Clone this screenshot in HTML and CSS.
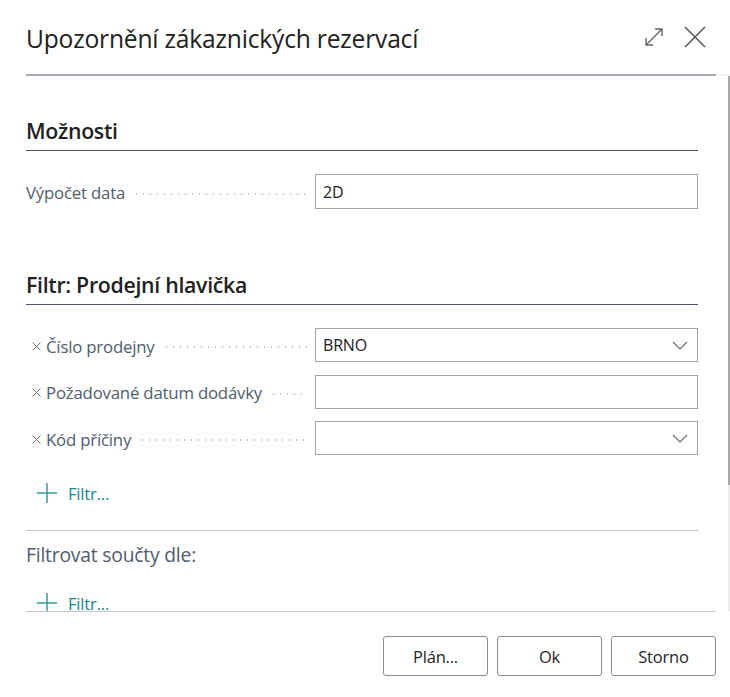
FILE: index.html
```html
<!DOCTYPE html>
<html lang="cs">
<head>
<meta charset="utf-8">
<title>Upozornění zákaznických rezervací</title>
<link rel="stylesheet" href="styles.css">
</head>
<body>
<div class="dialog">
  <header class="header">
    <h1 class="title">Upozornění zákaznických rezervací</h1>
    <div class="actions">
      <svg class="icon-expand" width="20" height="20" viewBox="0 0 20 20" aria-hidden="true">
        <path d="M2 18 L18 2 M11 2 H18 V9 M2 11 V18 H9" fill="none" stroke="#666" stroke-width="1.4"/>
      </svg>
      <svg class="icon-close" width="22" height="22" viewBox="0 0 22 22" aria-hidden="true">
        <path d="M1 1 L21 21 M21 1 L1 21" fill="none" stroke="#5a5a5a" stroke-width="1.6"/>
      </svg>
    </div>
  </header>
  <div class="header-rule"><div class="rule-dark"></div><div class="rule-light"></div></div>

  <div class="body">
    <div class="scroll">
      <section class="section first">
        <h2 class="section-title">Možnosti</h2>
        <div class="row">
          <div class="label-cell"><span class="label">Výpočet data</span><span class="leader"></span></div>
          <div class="field"><span class="value">2D</span></div>
        </div>
      </section>

      <section class="section second">
        <h2 class="section-title">Filtr: Prodejní hlavička</h2>
        <div class="row">
          <div class="label-cell"><svg class="remove" width="9" height="9" viewBox="0 0 9 9" aria-hidden="true"><path d="M0.5 0.5 L8.5 8.5 M8.5 0.5 L0.5 8.5" stroke="#707070" stroke-width="1"/></svg><span class="label">Číslo prodejny</span><span class="leader"></span></div>
          <div class="field"><span class="value">BRNO</span><svg class="chevron" width="16" height="9" viewBox="0 0 16 9" aria-hidden="true"><path d="M1 1 L8 8 L15 1" fill="none" stroke="#666" stroke-width="1.1"/></svg></div>
        </div>
        <div class="row">
          <div class="label-cell"><svg class="remove" width="9" height="9" viewBox="0 0 9 9" aria-hidden="true"><path d="M0.5 0.5 L8.5 8.5 M8.5 0.5 L0.5 8.5" stroke="#707070" stroke-width="1"/></svg><span class="label">Požadované datum dodávky</span><span class="leader"></span></div>
          <div class="field"></div>
        </div>
        <div class="row">
          <div class="label-cell"><svg class="remove" width="9" height="9" viewBox="0 0 9 9" aria-hidden="true"><path d="M0.5 0.5 L8.5 8.5 M8.5 0.5 L0.5 8.5" stroke="#707070" stroke-width="1"/></svg><span class="label">Kód příčiny</span><span class="leader"></span></div>
          <div class="field"><span class="value"></span><svg class="chevron" width="16" height="9" viewBox="0 0 16 9" aria-hidden="true"><path d="M1 1 L8 8 L15 1" fill="none" stroke="#666" stroke-width="1.1"/></svg></div>
        </div>
        <div class="add-filter">
          <svg class="plus" width="20" height="20" viewBox="0 0 20 20" aria-hidden="true"><path d="M10 0 V20 M0 10 H20" stroke="#3a9a9e" stroke-width="1.5"/></svg>
          <span>Filtr...</span>
        </div>
      </section>

      <div class="totals">
        <div class="totals-label">Filtrovat součty dle:</div>
        <div class="add-filter">
          <svg class="plus" width="20" height="20" viewBox="0 0 20 20" aria-hidden="true"><path d="M10 0 V20 M0 10 H20" stroke="#3a9a9e" stroke-width="1.5"/></svg>
          <span>Filtr...</span>
        </div>
      </div>
    </div>
    <div class="scrollbar"><div class="thumb"></div></div>
  </div>

  <footer class="footer">
    <button class="btn">Plán...</button>
    <button class="btn">Ok</button>
    <button class="btn">Storno</button>
  </footer>
</div>
</body>
</html>
```

FILE: styles.css
```css
* { box-sizing: border-box; }

html, body {
  margin: 0;
  padding: 0;
  background: #ffffff;
}

body {
  font-family: "Open Sans", "Noto Sans", "Liberation Sans", sans-serif;
  color: #212121;
  width: 730px;
  height: 697px;
  overflow: hidden;
}

.dialog {
  width: 730px;
  height: 697px;
  display: flex;
  flex-direction: column;
}

.header {
  height: 74px;
  display: flex;
  align-items: center;
  justify-content: space-between;
  padding: 2px 24px 0 26px;
}

.title {
  margin: 0;
  font-size: 24.6px;
  font-weight: 400;
  letter-spacing: -0.2px;
  color: #212121;
}

.actions {
  display: flex;
  align-items: center;
  gap: 20px;
  margin-top: -2px;
}

.icon-expand { display: block; }
.icon-close { display: block; }

.header-rule {
  display: flex;
  height: 2px;
}
.rule-dark {
  margin-left: 26px;
  width: 690px;
  background: #a5a9b3;
}
.rule-light {
  flex: 1;
  background: #f2f2f2;
}

.body {
  height: 535px;
  display: flex;
}

.scroll {
  flex: 1;
  overflow: hidden;
  padding: 0 30px 0 26px;
}

.scrollbar {
  width: 2px;
  background: #ececec;
  height: 535px;
}
.thumb {
  height: 409px;
  background: #a9a9a9;
}

.section-title {
  margin: 0;
  font-size: 21.3px;
  line-height: 28px;
  font-weight: 600;
  color: #212121;
  padding-bottom: 5px;
  border-bottom: 1px solid #4a5566;
  letter-spacing: -0.3px;
}

.section.first { padding-top: 41px; }
.section.second { padding-top: 62px; }

.row {
  display: grid;
  grid-template-columns: 289px 1fr;
  height: 34px;
  margin-top: 12.5px;
}
.section-title + .row { margin-top: 23px; }
.section.first .row { height: 35px; }

.label-cell {
  display: flex;
  align-items: center;
  padding-top: 2px;
}

.remove {
  flex: none;
  margin: 0 5px 0 6px;
}

.label {
  font-size: 16.8px;
  color: #505c6d;
  white-space: nowrap;
  letter-spacing: -0.2px;
}

.leader {
  flex: 1;
  height: 2px;
  margin: 2px 8px 0 8px;
  background-image: radial-gradient(circle, #c2c2c2 0.7px, transparent 0.9px);
  background-size: 7px 2px;
  background-repeat: repeat-x;
}

.field {
  border: 1px solid #a3a3a3;
  display: flex;
  align-items: center;
  justify-content: space-between;
  padding: 0 9px 0 7px;
}

.value {
  font-size: 16px;
  color: #212121;
  letter-spacing: -0.2px;
}

.chevron { display: block; flex: none; }

.add-filter {
  display: flex;
  align-items: center;
  height: 24px;
  margin-top: 26px;
  padding-left: 11px;
  color: #12878c;
  font-size: 16.6px;
  letter-spacing: -0.2px;
}
.add-filter .plus {
  display: block;
  margin-right: 11px;
}

.totals {
  margin-top: 25px;
  border-top: 1px solid #c6c6c6;
}
.totals-label {
  margin-top: 12px;
  height: 24px;
  line-height: 24px;
  font-size: 19.3px;
  color: #505c6d;
  letter-spacing: -0.2px;
}
.totals .add-filter { margin-top: 24px; }

.footer {
  border-top: 1px solid #c8c8c8;
  margin: 0 14px 0 26px;
  display: flex;
  justify-content: flex-end;
  gap: 9px;
  padding-top: 24px;
}

.btn {
  width: 105px;
  height: 40px;
  border: 1px solid #8c8c8c;
  border-radius: 3px;
  background: #ffffff;
  font-family: "Open Sans", "Noto Sans", "Liberation Sans", sans-serif;
  font-size: 16.5px;
  font-weight: 500;
  color: #262626;
  padding: 0;
  letter-spacing: -0.2px;
}
```
